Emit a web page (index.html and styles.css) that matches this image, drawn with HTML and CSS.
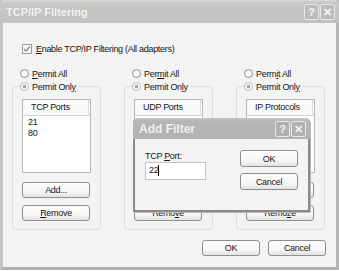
FILE: index.html
```html
<!DOCTYPE html>
<html lang="en">
<head>
    <meta charset="UTF-8">
    <title>TCP/IP Filtering</title>
    <link rel="stylesheet" href="styles.css">
</head>
<body>
    <div class="window">
        <div class="titlebar">
            <span class="title">TCP/IP Filtering</span>
            <div class="caption-btns">
                <span class="cap-btn">?</span>
                <span class="cap-btn">&#x2715;</span>
            </div>
        </div>

        <div class="content">
            <!-- opcao principal -->
            <div class="check-row">
                <span class="checkbox">
                    <svg width="8" height="8" viewBox="0 0 8 8"><polyline points="1,4 3,6 7,1.5" fill="none" stroke="#8a8a8a" stroke-width="1.4"/></svg>
                </span>
                <span class="check-label"><u>E</u>nable TCP/IP Filtering (All adapters)</span>
            </div>

            <div class="columns">
                <div class="column">
                    <div class="radio-row"><span class="radio"></span><span><u>P</u>ermit All</span></div>
                    <fieldset class="group">
                        <legend class="radio-row"><span class="radio on"></span><span>Permit Onl<u>y</u></span></legend>
                        <div class="list">
                            <div class="list-head"><span>TCP Ports</span></div>
                            <div class="list-item">21</div>
                            <div class="list-item">80</div>
                        </div>
                        <button class="btn add">Add...</button>
                        <button class="btn"><u>R</u>emove</button>
                    </fieldset>
                </div>

                <div class="column">
                    <div class="radio-row"><span class="radio"></span><span>Per<u>m</u>it All</span></div>
                    <fieldset class="group">
                        <legend class="radio-row"><span class="radio on"></span><span>Permit On<u>l</u>y</span></legend>
                        <div class="list">
                            <div class="list-head"><span>UDP Ports</span></div>
                        </div>
                        <button class="btn add">Add...</button>
                        <button class="btn">Remo<u>v</u>e</button>
                    </fieldset>
                </div>

                <div class="column">
                    <div class="radio-row"><span class="radio"></span><span>Perm<u>i</u>t All</span></div>
                    <fieldset class="group">
                        <legend class="radio-row"><span class="radio on"></span><span>Permit Onl<u>y</u></span></legend>
                        <div class="list">
                            <div class="list-head"><span>IP Protocols</span></div>
                        </div>
                        <button class="btn add">Add...</button>
                        <button class="btn">Remo<u>z</u>e</button>
                    </fieldset>
                </div>
            </div>

            <div class="footer">
                <button class="btn wide">OK</button>
                <button class="btn wide">Cancel</button>
            </div>
        </div>

        <!-- janela Add Filter por cima -->
        <div class="dialog">
            <div class="titlebar small">
                <span class="title">Add Filter</span>
                <div class="caption-btns">
                    <span class="cap-btn">?</span>
                    <span class="cap-btn">&#x2715;</span>
                </div>
            </div>
            <div class="dialog-body">
                <div class="field">
                    <label for="port">TCP <u>P</u>ort:</label>
                    <div class="input" id="port">22<span class="caret"></span></div>
                </div>
                <div class="dialog-btns">
                    <button class="btn wide">OK</button>
                    <button class="btn wide">Cancel</button>
                </div>
            </div>
        </div>
    </div>
</body>
</html>
```

FILE: styles.css
```css
body {
    margin: 0;
    background-color: #ffffff;
    font-family: "Liberation Sans", Arial, sans-serif;
    font-size: 9px;
    letter-spacing: -0.3px;
    color: #151515;
}

.window {
    position: relative;
    width: 339px;
    height: 270px;
    box-sizing: border-box;
    background-color: #f3f3f3;
    border: 3px solid #c4c4c4;
    border-top: none;
    border-right-color: #b4b4b4;
    border-bottom-color: #b0b0b0;
}

.titlebar {
    display: flex;
    align-items: center;
    justify-content: space-between;
    height: 23px;
    margin: 0 -3px;
    padding: 0 4px 0 6px;
    background: linear-gradient(#dadada 0, #c8c8c8 3px, #c2c2c2 100%);
    border-radius: 5px 5px 0 0;
}

.title {
    font-weight: bold;
    font-size: 11px;
    letter-spacing: 0;
    color: #f4f4f4;
    text-shadow: 0 0 1px #b0b0b0;
}

.caption-btns {
    display: flex;
    gap: 1px;
}

.cap-btn {
    width: 13px;
    height: 14px;
    border: 1px solid #e8e8e8;
    border-radius: 2px;
    background-color: #bdbdbd;
    color: #f6f6f6;
    font-weight: bold;
    font-size: 11px;
    letter-spacing: 0;
    line-height: 14px;
    text-align: center;
}

.content {
    padding: 19px 10px 0 9px;
}

.check-row {
    display: flex;
    align-items: center;
    gap: 4px;
    height: 13px;
    margin-left: 10px;
}

.check-label {
    letter-spacing: -0.3px;
}

.checkbox {
    display: flex;
    align-items: center;
    justify-content: center;
    width: 8px;
    height: 8px;
    border: 1px solid #9a9a9a;
    background-color: #fafafa;
}

.columns {
    display: grid;
    grid-template-columns: repeat(3, 89px);
    gap: 23px;
    margin-top: 12px;
}

.radio-row {
    display: flex;
    align-items: center;
    gap: 3px;
    height: 13px;
}

.column > .radio-row {
    padding-left: 8px;
}

.radio {
    box-sizing: border-box;
    width: 9px;
    height: 9px;
    border: 1px solid #8c8c8c;
    border-radius: 50%;
    background-color: #fbfbfb;
}

.radio.on {
    border-color: #b8b8b8;
    background: radial-gradient(circle, #a8a8a8 0, #a8a8a8 1.6px, #fbfbfb 2.2px);
}

.group {
    margin: 0;
    padding: 0 0 8px 9px;
    border: 1px solid #dedede;
    border-radius: 4px;
    display: flex;
    flex-direction: column;
    align-items: flex-start;
}

.group legend {
    padding: 0 2px 0 0;
    margin-left: -2px;
}

.list {
    box-sizing: border-box;
    width: 69px;
    height: 74px;
    margin-top: 6px;
    border: 1px solid #b9b9b9;
    background-color: #ffffff;
}

.list-head {
    height: 15px;
    border-bottom: 1px solid #d6d6d6;
    background-color: #f9f9f9;
}

.list-head span {
    display: block;
    width: 57px;
    height: 15px;
    line-height: 15px;
    padding-left: 8px;
    border-right: 1px solid #dcdcdc;
}

.list-item {
    padding-left: 5px;
    line-height: 11px;
}

.list-head + .list-item {
    margin-top: 1px;
}

.btn {
    box-sizing: border-box;
    width: 68px;
    height: 16px;
    margin-top: 7px;
    padding: 0;
    border: 1px solid #8e8e8e;
    border-radius: 3px;
    background: linear-gradient(#ffffff, #f4f4f4 70%, #e2e2e2);
    font-family: inherit;
    font-size: 9px;
    letter-spacing: -0.3px;
    color: #151515;
}

.btn.add {
    margin-top: 9px;
}

.btn.wide {
    width: 58px;
    margin-top: 0;
}

.footer {
    display: flex;
    justify-content: flex-end;
    gap: 8px;
    margin-top: 10px;
}

.dialog {
    position: absolute;
    left: 130px;
    top: 118px;
    width: 177px;
    height: 94px;
    box-sizing: border-box;
    background-color: #f3f3f3;
    border: 2px solid #8a8a8a;
    border-top: none;
    border-radius: 5px 5px 0 0;
    box-shadow: 1px 1px 0 #b8b8b8;
}

.titlebar.small {
    height: 21px;
    margin: 0 -2px;
    padding: 0 4px 0 6px;
    background: linear-gradient(#c6c6c6 0, #b6b6b6 3px, #b2b2b2 100%);
}

.titlebar.small .title {
    font-size: 12px;
    color: #f0f0f0;
}

.titlebar.small .cap-btn {
    background-color: #b0b0b0;
}

.dialog-body {
    display: flex;
    justify-content: space-between;
    padding: 11px 10px 0 10px;
}

.field label {
    display: block;
    line-height: 12px;
}

.input {
    box-sizing: border-box;
    width: 61px;
    height: 18px;
    padding: 2px 0 0 3px;
    border: 1px solid #c4c4c4;
    background-color: #ffffff;
    display: flex;
    align-items: flex-start;
}

.caret {
    width: 1px;
    height: 11px;
    background-color: #000000;
}

.dialog-btns {
    display: flex;
    flex-direction: column;
    gap: 6px;
}

.dialog-btns .btn {
    height: 17px;
}
```
